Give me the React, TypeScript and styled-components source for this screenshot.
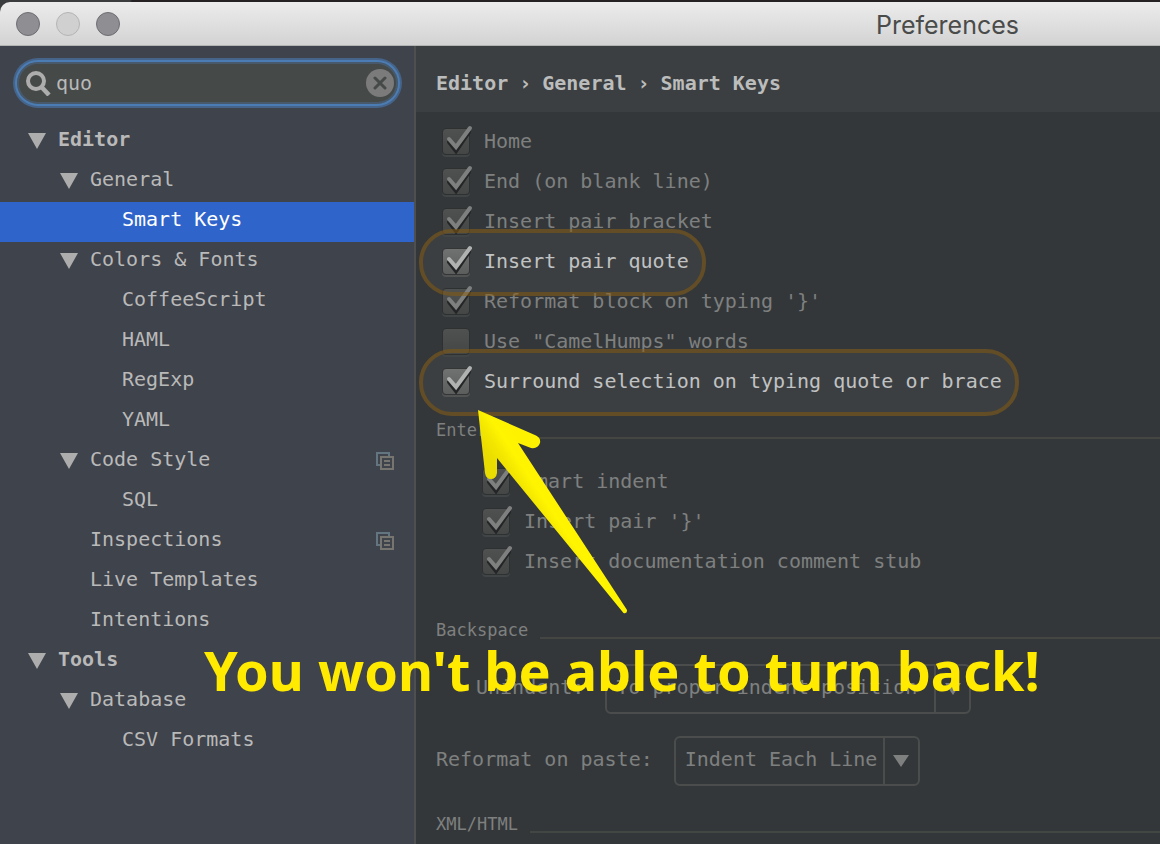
import React from "react";
import styled, { createGlobalStyle, css } from "styled-components";

const mono = `"DejaVu Sans Mono", "Liberation Mono", monospace`;

const GlobalStyle = createGlobalStyle`
  *, *::before, *::after { box-sizing: border-box; }
  body { margin: 0; background: #262223; overflow: hidden; }
  button, input, select { font: inherit; color: inherit; margin: 0; }
`;

const Desktop = styled.div`
  min-height: 100vh;
  padding-top: 2px;
  display: flex;
  flex-direction: column;
  background: linear-gradient(90deg, #3a3c3e 130px, #262223 132px);
  font-family: ${mono};
  font-size: 20px;
`;

const Window = styled.div`
  position: relative;
  flex: 1;
  display: flex;
  flex-direction: column;
  border-top-left-radius: 10px;
  overflow: hidden;
`;

const TitleBar = styled.header`
  height: 44px;
  flex: none;
  display: flex;
  align-items: center;
  gap: 16px;
  padding: 0 141px 0 16px;
  background: linear-gradient(#ececec, #d3d3d3);
  border-bottom: 1px solid #b2b4b4;
`;

const Light = styled.button<{ $pale?: boolean }>`
  width: 24px;
  height: 24px;
  padding: 0;
  border-radius: 50%;
  border: 1px solid ${(p) => (p.$pale ? "#b4b4b4" : "#6e6d72")};
  background: ${(p) => (p.$pale ? "#d0d0d0" : "#8f8e93")};
`;

const Title = styled.h1`
  margin: 0 0 0 auto;
  padding-top: 2px;
  font: 400 25px/40px Inter, sans-serif;
  color: #4a4b4b;
`;

const Body = styled.div`
  flex: 1;
  display: grid;
  grid-template-columns: 416px minmax(0, 1fr);
`;

const Sidebar = styled.aside`
  background: #3f434b;
  border-right: 2px solid #4e4f4f;
  color: #b9b9b9;
`;

const SearchField = styled.label`
  display: flex;
  align-items: center;
  gap: 4px;
  height: 46px;
  margin: 14px 14px 16px 15px;
  padding: 0 4px 0 9px;
  border: 2px solid #4b7db4;
  border-radius: 23px;
  background: #454948;
  box-shadow: 0 0 0 2px #46648a, inset 0 0 0 2px #47596a;
`;

const SearchInput = styled.input`
  flex: 1;
  min-width: 0;
  height: 34px;
  padding: 0;
  border: 0;
  outline: 0;
  background: transparent;
`;

const ClearButton = styled.button`
  width: 28px;
  height: 28px;
  padding: 0;
  border: 0;
  border-radius: 50%;
  background: #7b7b7b;
  display: grid;
  place-items: center;
`;

const Tree = styled.ul`
  list-style: none;
  margin: 0;
  padding: 0;
`;

const TreeRow = styled.button<{ $level: number; $selected?: boolean }>`
  display: flex;
  align-items: center;
  gap: 12px;
  width: 100%;
  height: 40px;
  border: 0;
  padding: 0 20px 0 ${(p) => 28 + p.$level * 32}px;
  text-align: left;
  font-weight: ${(p) => (p.$level === 0 ? 700 : 400)};
  background: ${(p) => (p.$selected ? "#2f65ca" : "transparent")};
  color: ${(p) => (p.$selected ? "#ffffff" : "inherit")};

  svg {
    display: block;
    margin-bottom: 2px;
  }
`;

const TreeMark = styled.span`
  width: 18px;
`;

const TreeText = styled.span`
  flex: 1;
  line-height: 34px;
  padding-bottom: 6px;
`;

const Main = styled.main`
  background: #343739;
  color: #7e8080;
  min-width: 0;
`;

const Crumbs = styled.nav`
  display: flex;
  gap: 12px;
  height: 66px;
  padding: 8px 20px 0;
  background: #3c3f41;
  color: #bbbcbc;
  font-weight: 700;
  line-height: 58px;
  white-space: nowrap;
`;

const CrumbMark = styled.span`
  width: 10px;
  display: flex;
  justify-content: center;
`;

const Options = styled.div<{ $indent?: boolean }>`
  display: flex;
  flex-direction: column;
  align-items: flex-start;
  padding-top: ${(p) => (p.$indent ? 20 : 10)}px;
  padding-left: ${(p) => (p.$indent ? 66 : 26)}px;
`;

const OptionLabel = styled.label<{ $lit?: boolean }>`
  position: relative;
  display: flex;
  align-items: center;
  gap: 14px;
  height: 40px;
  white-space: nowrap;
  ${(p) =>
    p.$lit &&
    css`
      color: #c0c2c3;
      &::before,
      &::after {
        content: "";
        position: absolute;
        inset: -13px -17px -14px -23px;
        border-radius: 33px;
      }
      &::before {
        background: #3c3f41;
      }
      &::after {
        border: 4px solid rgba(138, 91, 12, 0.5);
        pointer-events: none;
        z-index: 2;
      }
    `}
`;

const OptionText = styled.span`
  position: relative;
  z-index: 1;
  line-height: 38px;
  padding-bottom: 2px;
`;

const TickBox = styled.span`
  position: relative;
  z-index: 1;
  width: 28px;
  height: 28px;
  flex: none;
`;

const TickInput = styled.input<{ $lit?: boolean }>`
  appearance: none;
  display: block;
  width: 28px;
  height: 27px;
  border: 1px solid ${(p) => (p.$lit ? "#333536" : "#2e3132")};
  border-radius: 4px;
  background: ${(p) =>
    p.$lit ? "linear-gradient(#707171, #5c5d5d)" : "linear-gradient(#4f5151, #454747)"};
  box-shadow: 0 2px 0 ${(p) => (p.$lit ? "#525454" : "#424546")};
`;

const TickMark = styled.svg`
  position: absolute;
  left: 0;
  top: -4px;
  pointer-events: none;
`;

const ArrowDrawing = styled.svg`
  position: absolute;
  left: 34px;
  top: 46px;
  z-index: 4;
  pointer-events: none;
`;

const Group = styled.section<{ $space?: number }>`
  padding-top: ${(p) => p.$space ?? 0}px;
`;

const GroupTitle = styled.h2`
  display: flex;
  align-items: center;
  gap: 12px;
  height: 24px;
  margin: 0;
  padding-left: 20px;
  font: 400 17px/24px ${mono};
  &::after {
    content: "";
    flex: 1;
    height: 2px;
    margin-top: 16px;
    background: #444644;
  }
`;

const Field = styled.div<{ $indent?: boolean }>`
  display: flex;
  align-items: center;
  gap: 21px;
  padding-left: ${(p) => (p.$indent ? 60 : 20)}px;
  margin-bottom: 22px;
  white-space: nowrap;
`;

const FieldLabel = styled.label`
  line-height: 46px;
  padding-bottom: 4px;
`;

const SelectBox = styled.span<{ $width: number }>`
  position: relative;
  width: ${(p) => p.$width}px;
  height: 50px;
`;

const Select = styled.select`
  appearance: none;
  width: 100%;
  height: 50px;
  padding: 0 36px 4px 9px;
  border: 2px solid #4b4d4d;
  border-radius: 6px;
  background: transparent;
`;

const SelectArrow = styled.span`
  position: absolute;
  top: 2px;
  bottom: 2px;
  right: 2px;
  width: 35px;
  border-left: 2px solid #4b4d4d;
  display: grid;
  place-items: center;
  pointer-events: none;
`;

const Caption = styled.p`
  position: absolute;
  left: 204px;
  top: 640px;
  z-index: 5;
  margin: 0;
  font: 700 54px/56px "Noto Sans", "Open Sans", sans-serif;
  color: #ffea00;
  white-space: nowrap;
  pointer-events: none;
`;

type Node = { text: string; level: number; open?: boolean; selected?: boolean; shared?: boolean };

const nodes: Node[] = [
  { text: "Editor", level: 0, open: true },
  { text: "General", level: 1, open: true },
  { text: "Smart Keys", level: 2, selected: true },
  { text: "Colors & Fonts", level: 1, open: true },
  { text: "CoffeeScript", level: 2 },
  { text: "HAML", level: 2 },
  { text: "RegExp", level: 2 },
  { text: "YAML", level: 2 },
  { text: "Code Style", level: 1, open: true, shared: true },
  { text: "SQL", level: 2 },
  { text: "Inspections", level: 1, shared: true },
  { text: "Live Templates", level: 1 },
  { text: "Intentions", level: 1 },
  { text: "Tools", level: 0, open: true },
  { text: "Database", level: 1, open: true },
  { text: "CSV Formats", level: 2 },
];

const Triangle = () => (
  <svg width="18" height="16" viewBox="0 0 18 16" aria-hidden="true">
    <path d="M0 0H18L9 16Z" fill="#adadad" />
  </svg>
);

const SharedIcon = () => (
  <svg width="18" height="18" viewBox="0 0 18 18" fill="none" strokeWidth="2" aria-hidden="true">
    <path d="M4 13H1V1H13V4" stroke="#647582" />
    <path d="M5 5H17V17H5ZM8 9H14M8 13H14" stroke="#77756f" />
  </svg>
);

const Arrow = () => (
  <ArrowDrawing width="156" height="208" viewBox="476 408 156 208" aria-hidden="true">
    <defs>
      <linearGradient id="shaft" gradientUnits="userSpaceOnUse" x1="494" y1="466" x2="524" y2="446">
        <stop offset="0" stopColor="#e9dc00" />
        <stop offset="0.35" stopColor="#f3e700" />
        <stop offset="0.65" stopColor="#fff500" />
        <stop offset="1" stopColor="#fff200" />
      </linearGradient>
    </defs>
    <path
      fill="url(#shaft)"
      d="M478 410L536 435.500Q541 438 540 443Q538 449 531 448L518 443L627 610Q627.500 614 623.500 613L497 458V473Q496 479 491 479Q486 479 485 473Z"
    />
  </ArrowDrawing>
);

type OptionProps = { text: string; checked?: boolean; lit?: boolean; children?: React.ReactNode };

const Option = ({ text, checked = true, lit, children }: OptionProps) => (
  <OptionLabel $lit={lit}>
    <TickBox>
      <TickInput type="checkbox" defaultChecked={checked} $lit={lit} />
      {checked && (
        <TickMark width="32" height="32" viewBox="0 -4 32 32" fill="none" strokeLinecap="round" aria-hidden="true">
          <path d="M7 14L14 23L27 4" stroke="#232526" strokeWidth="4" />
          <path d="M7 11L14 19L28 0" stroke={lit ? "#b0b1b1" : "#7e8080"} strokeWidth="4" />
        </TickMark>
      )}
    </TickBox>
    <OptionText>{text}</OptionText>
    {children}
  </OptionLabel>
);

type ChoiceProps = { id: string; label: string; value: string; width: number; indent?: boolean };

const Choice = ({ id, label, value, width, indent }: ChoiceProps) => (
  <Field $indent={indent}>
    <FieldLabel htmlFor={id}>{label}</FieldLabel>
    <SelectBox $width={width}>
      <Select id={id}>
        <option>{value}</option>
      </Select>
      <SelectArrow>
        <svg width="16" height="12" viewBox="0 0 16 12" aria-hidden="true">
          <path d="M0 0H16L8 12Z" fill="#7e8080" />
        </svg>
      </SelectArrow>
    </SelectBox>
  </Field>
);

export default function App() {
  return (
    <Desktop>
      <GlobalStyle />
      <Window>
        <TitleBar>
          <Light aria-label="Close" />
          <Light aria-label="Minimize" $pale />
          <Light aria-label="Zoom" />
          <Title>Preferences</Title>
        </TitleBar>
        <Body>
          <Sidebar>
            <SearchField>
              <svg width="26" height="26" viewBox="0 0 26 26" fill="none" stroke="#adadad" aria-hidden="true">
                <circle cx="10" cy="11" r="8" strokeWidth="4" />
                <path d="M15.500 17L23 25" strokeWidth="4.500" />
              </svg>
              <SearchInput defaultValue="quo" aria-label="Search settings" />
              <ClearButton aria-label="Clear search">
                <svg width="14" height="14" viewBox="0 0 14 14" stroke="#454948" strokeWidth="3" strokeLinecap="round">
                  <path d="M2 2L12 12M12 2L2 12" />
                </svg>
              </ClearButton>
            </SearchField>
            <Tree>
              {nodes.map((n) => (
                <li key={n.text}>
                  <TreeRow $level={n.level} $selected={n.selected}>
                    <TreeMark>{n.open && <Triangle />}</TreeMark>
                    <TreeText>{n.text}</TreeText>
                    {n.shared && <SharedIcon />}
                  </TreeRow>
                </li>
              ))}
            </Tree>
          </Sidebar>
          <Main>
            <Crumbs>
              <span>Editor</span>
              <CrumbMark>›</CrumbMark>
              <span>General</span>
              <CrumbMark>›</CrumbMark>
              <span>Smart Keys</span>
            </Crumbs>
            <Options>
              <Option text="Home" />
              <Option text="End (on blank line)" />
              <Option text="Insert pair bracket" />
              <Option text="Insert pair quote" lit />
              <Option text="Reformat block on typing '}'" />
              <Option text={'Use "CamelHumps" words'} checked={false} />
              <Option text="Surround selection on typing quote or brace" lit>
                <Arrow />
              </Option>
            </Options>
            <Group $space={16}>
              <GroupTitle>Enter</GroupTitle>
              <Options $indent>
                <Option text="Smart indent" />
                <Option text="Insert pair '}'" />
                <Option text="Insert documentation comment stub" />
              </Options>
            </Group>
            <Group $space={36}>
              <GroupTitle>Backspace</GroupTitle>
              <Group $space={22}>
                <Choice id="unindent" label="Unindent:" value="To proper indent position" width={366} indent />
                <Choice id="reformat" label="Reformat on paste:" value="Indent Each Line" width={246} />
              </Group>
            </Group>
            <Group $space={4}>
              <GroupTitle>XML/HTML</GroupTitle>
            </Group>
          </Main>
        </Body>
        <Caption>You won't be able to turn back!</Caption>
      </Window>
    </Desktop>
  );
}
